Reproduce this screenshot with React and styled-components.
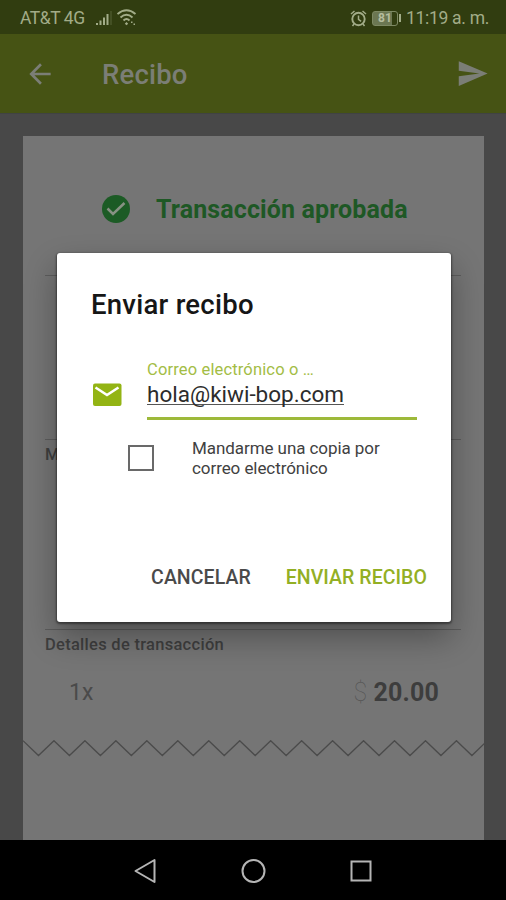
import React from "react";
import styled, { createGlobalStyle } from "styled-components";

const GlobalStyle = createGlobalStyle`
  * {
    box-sizing: border-box;
  }
  body {
    margin: 0;
    font-family: Roboto, "Liberation Sans", sans-serif;
    background: #000;
  }
`

const Screen = styled.div`
  position: relative;
  width: 506px;
  height: 900px;
  display: flex;
  flex-direction: column;
  overflow: hidden;
  background: #484848;
`

const StatusBar = styled.div`
  flex: 0 0 34px;
  display: flex;
  align-items: center;
  justify-content: space-between;
  padding: 2px 17px 0 20px;
  background: #313d10;
  color: #a2ac88;
  font-size: 17.5px;
  white-space: nowrap;
`

const StatusGroup = styled.div`
  display: flex;
  align-items: center;
`

const Carrier = styled.span`
  width: 65px;
  margin-right: 11px;
  letter-spacing: -0.45px;
`

const Time = styled.span`
  width: 83px;
  margin-left: 5px;
  letter-spacing: -0.3px;
`

const Header = styled.header`
  flex: 0 0 79px;
  display: flex;
  align-items: center;
  padding: 0 17px 0 24px;
  background: #465314;
  color: #7b7e76;
`

const Title = styled.h1`
  flex: 1;
  margin: 2px 0 0 46px;
  font-size: 27.5px;
  font-weight: 500;
  letter-spacing: 0.2px;
`

const Body = styled.main`
  flex: 1;
  display: flex;
  padding: 22px 22px 0 23px;
  border-top: 1px solid #404342;
`

const Paper = styled.section`
  flex: 1;
  display: flex;
  flex-direction: column;
  background: #757575;
`

const Approved = styled.div`
  height: 139px;
  display: flex;
  align-items: center;
  padding: 7px 0 0 78px;
  color: #1e5825;
  font-size: 25px;
  font-weight: 700;
  letter-spacing: 0.12px;
  white-space: nowrap;

  svg {
    margin-right: 25px;
  }
`

const Block = styled.div`
  height: ${props => props.$height}px;
  margin: 0 23px 0 22px;
  padding-top: 5px;
  border-top: 1px solid #5d5d5d;
  color: #3f3f3f;
  font-size: 16.5px;
  font-weight: 500;
  line-height: 20px;
  letter-spacing: 0.28px;
`

const Item = styled.div`
  display: flex;
  justify-content: space-between;
  align-items: center;
  height: 30px;
  margin-top: 23px;
  padding: 0 22px 0 24px;
  font-size: 23px;
  font-weight: 400;
  letter-spacing: 0;
  color: #4a4a4a;
`

const Price = styled.span`
  font-size: 25px;
  font-weight: 700;
  letter-spacing: 0.2px;
  color: #3d3d3d;
`

const Currency = styled.span`
  font-weight: 100;
  margin-right: 6px;
  color: #555;
`

const NavBar = styled.nav`
  flex: 0 0 60px;
  display: flex;
  align-items: center;
  justify-content: center;
  gap: 82px;
  padding-top: 1px;
  background: #000;
`

const Dialog = styled.div`
  position: absolute;
  top: 253px;
  left: 57px;
  width: 394px;
  height: 369px;
  display: flex;
  flex-direction: column;
  padding: 35px 24px 0 34px;
  border-radius: 3px;
  background: #fff;
  box-shadow: 0 1px 2px 1px rgba(0, 0, 0, 0.4), 0 15px 32px rgba(0, 0, 0, 0.33);
`

const DialogTitle = styled.h2`
  margin: 0;
  color: #161616;
  font-size: 27.5px;
  font-weight: 500;
  line-height: 33px;
  letter-spacing: 0.25px;
`

const FieldRow = styled.div`
  display: flex;
  align-items: center;
  margin-top: 37px;

  svg {
    margin-top: 12px;
  }
`

const Field = styled.div`
  width: 270px;
  height: 62px;
  margin-left: 24px;
  border-bottom: 3px solid #9db93a;
`

const Label = styled.div`
  color: #a3bd45;
  font-size: 16.5px;
  line-height: 23px;
  letter-spacing: 0.15px;
  white-space: nowrap;
`

const Value = styled.div`
  width: max-content;
  height: 24px;
  border-bottom: 1px solid #555;
  color: #2c2c2c;
  font-size: 22.5px;
  line-height: 26px;
`

const CopyRow = styled.label`
  display: flex;
  align-items: center;
  margin-top: 18px;
  padding-left: 37px;
`

const Checkbox = styled.span`
  width: 26px;
  height: 26px;
  margin-right: 38px;
  border: 2px solid #696969;
`

const CopyText = styled.span`
  color: #414141;
  font-size: 17px;
  line-height: 20px;
  letter-spacing: -0.07px;
  white-space: nowrap;
`

const Actions = styled.div`
  display: flex;
  justify-content: flex-end;
  margin-top: 87px;
  gap: 35px;
`

const Button = styled.button`
  padding: 0;
  border: 0;
  background: none;
  color: ${props => (props.$primary ? "#93af24" : "#4a4a4a")};
  font: 500 19.5px/26px Roboto, "Liberation Sans", sans-serif;
  letter-spacing: 0.06px;
  white-space: nowrap;
`

const Signal = () => (
  <svg width="17" height="16" viewBox="0 0 17 16" fill="#a2ac88">
    <path d="M0 13h2v2H0zM3.500 10.500h2V15h-2zM7 7.500h2V15H7zM10.500 4h2v11h-2z" />
    <path d="M14.500 1h1v14h-1z" opacity=".35" />
  </svg>
)

const WifiSlot = styled.span`
  display: flex;
  margin: -2px 0 0 4px;
`

const Wifi = () => (
  <svg width="20" height="17" viewBox="0 0 20 17" fill="none" stroke="#a2ac88" strokeWidth="1.9">
    <path d="M.500 5Q9.500-2.500 18.500 5M3.500 8.500Q9.500 3 15.500 8.500M6.500 11.500Q9.500 8.500 12.500 11.500" />
    <path d="M9.500 13l1.700 1.700-1.700 1.600-1.700-1.600zM14 12.500h1.500v1.500H14zM16.500 14.500H18V16h-1.500z" fill="#a2ac88" stroke="none" />
  </svg>
)

const Alarm = () => (
  <svg width="17" height="17" viewBox="0 0 17 17" fill="none" stroke="#a2ac88" strokeWidth="1.9">
    <circle cx="8.500" cy="9" r="6.200" />
    <path d="M1 4l3.500-3M16 4l-3.500-3M8.500 5.500v3.800l2.600 2M4 14l-1.500 2M13 14l1.500 2" strokeWidth="1.500" />
  </svg>
)

const Battery = styled.span`
  display: flex;
  align-items: center;
  justify-content: center;
  width: 26px;
  height: 15px;
  margin-left: 5px;
  border: 1px solid #7d8963;
  border-radius: 3px;
  background: linear-gradient(to right, #6b7752 81%, transparent 81%);
  color: #b5bd9e;
  font-size: 12px;
  font-weight: 700;
`

const BatteryTip = styled.span`
  width: 2px;
  height: 8px;
  margin-left: 1px;
  background: #a2ac88;
`

// torn edge at the bottom of the receipt, the last tooth is cut by the paper
const TornEdge = () => {
  const points = Array.from({ length: 31 }, (_, i) => `${i * 15.48},${i % 2 ? 15.5 : 0.7}`)
  return (
    <svg width="461" height="18" fill="none" stroke="#4b4b4b" strokeWidth="1.300">
      <polyline points={points.join(" ")} />
    </svg>
  )
}

const App = () => (
  <>
    <GlobalStyle />
    <Screen>
      <StatusBar>
        <StatusGroup>
          <Carrier>AT&amp;T 4G</Carrier>
          <Signal />
          <WifiSlot>
            <Wifi />
          </WifiSlot>
        </StatusGroup>
        <StatusGroup>
          <Alarm />
          <Battery>81</Battery>
          <BatteryTip />
          <Time>11:19 a. m.</Time>
        </StatusGroup>
      </StatusBar>
      <Header>
        <svg width="32" height="32" viewBox="0 0 24 24" fill="currentColor">
          <path d="M20 11H7.830l5.590-5.590L12 4l-8 8 8 8 1.410-1.410L7.830 13H20v-2z" />
        </svg>
        <Title>Recibo</Title>
        <svg width="33" height="33" viewBox="0 0 24 24" fill="currentColor">
          <path d="M2.010 21L23 12 2.010 3 2 10l15 2-15 2z" />
        </svg>
      </Header>
      <Body>
        <Paper>
          <Approved>
            <svg width="30" height="30" viewBox="0 0 30 30">
              <circle cx="15" cy="15" r="14" fill="#1c5b25" />
              <path d="M6.500 14.500l5.500 5.500L23.500 9" fill="none" stroke="#879183" strokeWidth="2.500" />
            </svg>
            Transacción aprobada
          </Approved>
          <Block $height={164} />
          <Block $height={190}>Método de pago</Block>
          <Block $height={111}>
            Detalles de transacción
            <Item>
              <span>1x</span>
              <Price><Currency>$</Currency>20.00</Price>
            </Item>
          </Block>
          <TornEdge />
        </Paper>
      </Body>
      <NavBar>
        <svg width="26" height="26" viewBox="0 0 26 26" fill="none" stroke="#b5b5b5" strokeWidth="2" strokeLinejoin="round">
          <path d="M22.500 2v22L3.500 13z" />
        </svg>
        <svg width="26" height="26" viewBox="0 0 26 26" fill="none" stroke="#b5b5b5" strokeWidth="2">
          <circle cx="13.500" cy="13" r="11" />
        </svg>
        <svg width="26" height="26" viewBox="0 0 26 26" fill="none" stroke="#b5b5b5" strokeWidth="2">
          <rect x="3.500" y="3.500" width="19" height="19" />
        </svg>
      </NavBar>
      <Dialog>
        <DialogTitle>Enviar recibo</DialogTitle>
        <FieldRow>
          <svg width="32" height="24" viewBox="0 0 32 24">
            <rect x="2" y="0.500" width="28.500" height="22.500" rx="2" fill="#93b414" />
            <path d="M4.500 4.500L16 12 27.500 4.500" fill="none" stroke="#fff" strokeWidth="2.600" />
          </svg>
          <Field>
            <Label>Correo electrónico o …</Label>
            <Value>hola@kiwi-bop.com</Value>
          </Field>
        </FieldRow>
        <CopyRow>
          <Checkbox />
          <CopyText>
            Mandarme una copia por
            <br />
            correo electrónico
          </CopyText>
        </CopyRow>
        <Actions>
          <Button>CANCELAR</Button>
          <Button $primary>ENVIAR RECIBO</Button>
        </Actions>
      </Dialog>
    </Screen>
  </>
)

export default App
